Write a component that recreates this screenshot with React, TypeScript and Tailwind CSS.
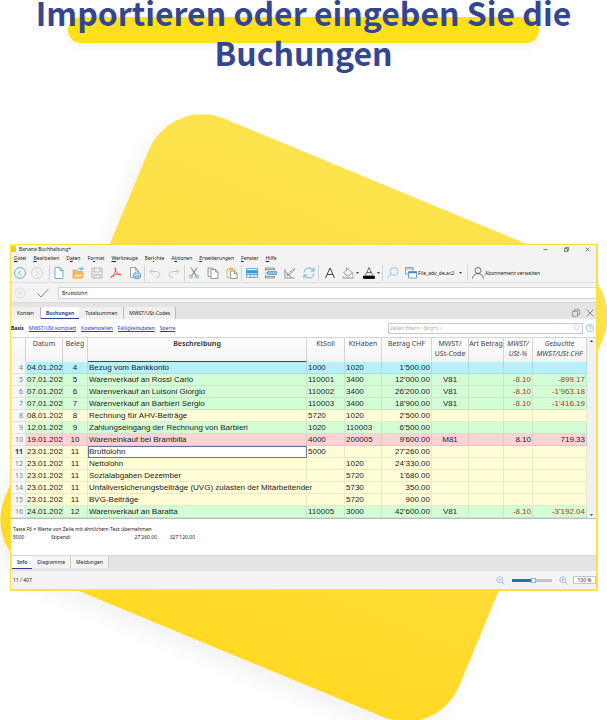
import type { ReactNode } from 'react'

interface Booking {
  nr: number
  datum: string
  beleg: string
  text: string
  soll?: string
  haben?: string
  betrag: string
  code?: string
  satz?: string
  gebucht?: string
  tone: string
}

const BLUE = 'bg-[#b6f0fa]'
const GREEN = 'bg-[#d4fed5]'
const YELLOW = 'bg-[#fffed6]'
const PINK = 'bg-[#fed3d6]'

const bookings: Booking[] = [
  { nr: 4, datum: '04.01.202', beleg: '4', text: 'Bezug vom Bankkonto', soll: '1000', haben: '1020', betrag: "1'500.00", tone: BLUE },
  { nr: 5, datum: '07.01.202', beleg: '5', text: 'Warenverkauf an Rossi Carlo', soll: '110001', haben: '3400', betrag: "12'000.00", code: 'V81', satz: '-8.10', gebucht: '-899.17', tone: GREEN },
  { nr: 6, datum: '07.01.202', beleg: '6', text: 'Warenverkauf an Luisoni Giorgio', soll: '110002', haben: '3400', betrag: "26'200.00", code: 'V81', satz: '-8.10', gebucht: "-1'963.18", tone: GREEN },
  { nr: 7, datum: '07.01.202', beleg: '7', text: 'Warenverkauf an Barbieri Sergio', soll: '110003', haben: '3400', betrag: "18'900.00", code: 'V81', satz: '-8.10', gebucht: "-1'416.19", tone: GREEN },
  { nr: 8, datum: '08.01.202', beleg: '8', text: 'Rechnung für AHV-Beiträge', soll: '5720', haben: '1020', betrag: "2'500.00", tone: YELLOW },
  { nr: 9, datum: '12.01.202', beleg: '9', text: 'Zahlungseingang der Rechnung von Barbieri', soll: '1020', haben: '110003', betrag: "6'500.00", tone: GREEN },
  { nr: 10, datum: '19.01.202', beleg: '10', text: 'Wareneinkauf bei Brambilla', soll: '4000', haben: '200005', betrag: "9'600.00", code: 'M81', satz: '8.10', gebucht: '719.33', tone: PINK },
  { nr: 11, datum: '23.01.202', beleg: '11', text: 'Bruttolohn', soll: '5000', betrag: "27'260.00", tone: YELLOW },
  { nr: 12, datum: '23.01.202', beleg: '11', text: 'Nettolohn', haben: '1020', betrag: "24'330.00", tone: YELLOW },
  { nr: 13, datum: '23.01.202', beleg: '11', text: 'Sozialabgaben Dezember', haben: '5720', betrag: "1'680.00", tone: YELLOW },
  { nr: 14, datum: '23.01.202', beleg: '11', text: 'Unfallversicherungsbeiträge (UVG) zulasten der Mitarbeitender', haben: '5730', betrag: '350.00', tone: YELLOW },
  { nr: 15, datum: '23.01.202', beleg: '11', text: 'BVG-Beiträge', haben: '5720', betrag: '900.00', tone: YELLOW },
  { nr: 16, datum: '24.01.202', beleg: '12', text: 'Warenverkauf an Baratta', soll: '110005', haben: '3000', betrag: "42'600.00", code: 'V81', satz: '-8.10', gebucht: "-3'192.04", tone: GREEN },
]

// [before, access key, after]
const menus = [
  ['', 'D', 'atei'],
  ['', 'B', 'earbeiten'],
  ['D', 'a', 'ten'],
  ['Fo', 'r', 'mat'],
  ['', 'W', 'erkzeuge'],
  ['Ber', 'i', 'chte'],
  ['A', 'k', 'tionen'],
  ['', 'E', 'rweiterungen'],
  ['', 'F', 'enster'],
  ['', 'H', 'ilfe'],
]

function Icon({ children, className = 'size-3 text-[#777]' }: { children: ReactNode; className?: string }) {
  return (
    <svg viewBox="0 0 24 24" fill="none" stroke="currentColor" strokeWidth="1.5" className={`shrink-0 ${className}`} aria-hidden="true">
      {children}
    </svg>
  )
}

function Tool({ label, children }: { label: string; children: ReactNode }) {
  return (
    <button aria-label={label} className="flex h-4 flex-1 items-center justify-center gap-[2px]">
      {children}
    </button>
  )
}

function Divider() {
  return <span className="h-4 w-px shrink-0 bg-[#d4d4d4]" />
}

function Caret() {
  return (
    <svg viewBox="0 0 6 4" className="h-[2px] w-[3px] shrink-0 fill-[#444]" aria-hidden="true">
      <path d="M0 0h6L3 4z" />
    </svg>
  )
}

function Toolbar() {
  return (
    <div className="flex h-[19px] items-center">
      <div className="flex w-[38px] shrink-0 items-center pr-1">
        <Tool label="Zurück">
          <Icon className="size-3 text-[#4596cf]">
            <circle cx="12" cy="12" r="11" />
            <path d="M14 7l-5 5 5 5" />
          </Icon>
        </Tool>
        <Tool label="Vorwärts">
          <Icon className="size-3 text-[#c4c4c4]">
            <circle cx="12" cy="12" r="11" />
            <path d="M10 7l5 5-5 5" />
          </Icon>
        </Tool>
      </div>
      <Divider />
      <div className="flex w-[94px] shrink-0 items-center">
        <Tool label="Neu">
          <Icon className="size-3 text-[#4596cf]">
            <path d="M4 1h10l6 6v16H4zM14 1v6h6" fill="#fff" />
          </Icon>
        </Tool>
        <Tool label="Öffnen">
          <Icon className="size-3 text-[#e5a13a]">
            <path d="M2 22V6h7l2 3h10v13z" fill="#f3b964" />
            <path d="M2 22l4-9h17l-3 9z" fill="#f9d58f" />
            <path d="M12 6c1-4 6-5 9-3M21 0v5h-5" stroke="#4596cf" />
          </Icon>
        </Tool>
        <Tool label="Speichern">
          <Icon className="size-3 text-[#a8a8a8]">
            <path d="M2 2h20v20H2zM6 2v8h12V2M6 22v-7h12v7M9 18h4" />
          </Icon>
        </Tool>
        <Tool label="PDF">
          <Icon className="size-3 text-[#e0342c]">
            <path d="M2 21c3-1 8-8 10-17 .5-3-3-3-2 0 1 5 5 11 11 12 2 0 2-2-1-2-5 0-12 2-17 5-2 1-3 2-1 2z" />
          </Icon>
        </Tool>
        <Tool label="Druckvorschau">
          <Icon className="size-3 text-[#7a8792]">
            <path d="M9 21H3V1h10l5 5v6M13 1v5h5" fill="#fff" />
            <path d="M9 14h14v6H9zM12 14v-4h8v4M12 18h8v5h-8z" stroke="#3f8cc6" fill="#fff" />
          </Icon>
        </Tool>
      </div>
      <Divider />
      <div className="flex w-[39px] shrink-0 items-center">
        <Tool label="Rückgängig">
          <Icon className="size-3 text-[#b5b5b5]">
            <path d="M8 3L2 9l6 6M2 9h13c9 0 9 12 0 12h-2" />
          </Icon>
        </Tool>
        <Tool label="Wiederholen">
          <Icon className="size-3 text-[#b5b5b5]">
            <path d="M16 3l6 6-6 6M22 9H9c-9 0-9 12 0 12h2" />
          </Icon>
        </Tool>
      </div>
      <Divider />
      <div className="flex w-[56px] shrink-0 items-center">
        <Tool label="Ausschneiden">
          <Icon className="size-3 text-[#555]">
            <path d="M6 1l10 16M18 1L8 17" />
            <circle cx="6" cy="19" r="3" stroke="#4596cf" />
            <circle cx="18" cy="19" r="3" stroke="#4596cf" />
          </Icon>
        </Tool>
        <Tool label="Kopieren">
          <Icon>
            <path d="M7 19H2V2h9l3 3" />
            <path d="M8 5h9l5 5v13H8zM17 5v5h5" fill="#fff" />
          </Icon>
        </Tool>
        <Tool label="Einfügen">
          <Icon>
            <path d="M8 21H2V4h16v4M7 4V2h6v3H7" stroke="#e5a13a" />
            <path d="M9 8h8l5 5v10H9zM17 8v5h5" fill="#fff" />
          </Icon>
        </Tool>
      </div>
      <Divider />
      <div className="flex w-[76px] shrink-0 items-center">
        <Tool label="Zeilen hinzufügen">
          <Icon className="size-3 text-[#4596cf]">
            <path d="M1 3h22v18H1zM1 15h22M9 15v6M16 15v6" />
            <path d="M1 7h22v5H1z" fill="#4596cf" />
          </Icon>
        </Tool>
        <Tool label="Zeilen einfügen">
          <Icon>
            <path d="M1 8V2h18v4M1 16v6h18v-4M1 5h17M1 19h17" />
            <path d="M5 9h18v6H5zM5 12H0" stroke="#4596cf" fill="#8fc1e6" />
          </Icon>
        </Tool>
        <Tool label="Prüfen">
          <Icon>
            <path d="M2 4v18h19M2 8l14 14M7 13l-1 4 4-1L22 5" />
            <path d="M9 12L22 2" stroke="#4596cf" />
          </Icon>
        </Tool>
        <Tool label="Neu berechnen">
          <Icon className="size-3 text-[#4596cf]">
            <path d="M2 11C3 1 16-1 21 7M22 1v7h-7M22 13c-1 10-14 12-19 4M2 23v-7h7" />
          </Icon>
        </Tool>
      </div>
      <Divider />
      <div className="flex w-[63px] shrink-0 items-center">
        <Tool label="Schrift">
          <Icon className="size-3 text-[#444]">
            <path d="M3 22L12 2l9 20M6 15h12" strokeWidth="2" />
          </Icon>
        </Tool>
        <Tool label="Hintergrundfarbe">
          <Icon>
            <path d="M4 11l8-8 8 8-7 7H9zM9 6V1M20 11c2 3 3 5 1 5M2 22h20M2 19v3M22 19v3" />
          </Icon>
          <Caret />
        </Tool>
        <Tool label="Textfarbe">
          <Icon className="size-3 text-[#444]">
            <path d="M5 16l7-15 7 15M8 11h8" />
            <path d="M1 18h22v5H1z" fill="#000" stroke="#000" />
          </Icon>
          <Caret />
        </Tool>
      </div>
      <Divider />
      <div className="flex w-[84px] shrink-0 items-center">
        <button aria-label="Suchen" className="flex w-5 items-center justify-center">
          <Icon className="size-3 text-[#7db4dc]">
            <circle cx="14" cy="9" r="8" />
            <path d="M8 15l-7 7" />
          </Icon>
        </button>
        <button className="flex flex-1 items-center gap-px pl-[2px] whitespace-nowrap">
          <Icon className="size-3 text-[#3f8cc6]">
            <path d="M1 1h15v13H1zM1 4h15" fill="#fff" />
            <path d="M7 9h16v13H7z" fill="#fff" />
            <path d="M7 11h16" strokeWidth="3" />
          </Icon>
          <span className="mr-1">File_adv_de.ac2</span>
          <Caret />
        </button>
      </div>
      <Divider />
      <button className="ml-1 flex items-center gap-px whitespace-nowrap">
        <Icon className="size-3 text-[#444]">
          <circle cx="12" cy="7" r="6" />
          <path d="M1 23c1-13 21-13 22 0" />
        </Icon>
        Abonnement verwalten
      </button>
    </div>
  )
}

function BookingTable() {
  return (
    <div className="flex">
      <div className="min-w-0 flex-1">
        <table className="w-full table-fixed border-separate border-spacing-0 font-['Liberation_Sans',Arial,sans-serif] text-[8px] leading-[11px] text-[#222]">
          <colgroup>
            <col className="w-[15px]" />
            <col className="w-[37px]" />
            <col className="w-[25px]" />
            <col />
            <col className="w-[38px]" />
            <col className="w-[37px]" />
            <col className="w-[50px]" />
            <col className="w-[37px]" />
            <col className="w-[35px]" />
            <col className="w-[29px]" />
            <col className="w-[54px]" />
          </colgroup>
          <thead className="bg-linear-to-b from-white to-[#f3f3f3] font-['Noto_Sans',sans-serif] text-[7px] leading-[10px] text-[#444]">
            <tr className="h-[25px] align-top *:border-t *:border-r *:border-[#d4d4d4] *:p-0 *:pt-px *:font-normal *:whitespace-nowrap">
              <th aria-label="Zeile" />
              <th>Datum</th>
              <th>Beleg</th>
              <th className="border-b border-b-[#33428f]!"><b>Beschreibung</b></th>
              <th>KtSoll</th>
              <th>KtHaben</th>
              <th>Betrag CHF</th>
              <th>MWST/<br />USt-Code</th>
              <th>Art Betrag</th>
              <th className="italic">MWST/<br />USt-%</th>
              <th className="italic">Gebuchte<br />MWST/USt CHF</th>
            </tr>
          </thead>
          <tbody>
            {bookings.map((b) => {
              const active = b.nr === 11
              const amount = b.gebucht?.startsWith('-') ? 'text-[#bd2f22]' : ''
              return (
                <tr key={b.nr} className={`h-3 *:border-r *:border-b *:border-black/8 *:p-0 *:whitespace-nowrap ${b.tone}`}>
                  <th className={`bg-[#f7f7f7] pr-[2px]! text-right font-['Noto_Sans',sans-serif] text-[7px] ${active ? 'font-bold text-[#333]' : 'font-normal text-[#777]'}`}>{b.nr}</th>
                  <td className="pl-px!">{b.datum}</td>
                  <td className="text-center">{b.beleg}</td>
                  <td className={`pl-px! ${active ? 'bg-white outline -outline-offset-1 outline-[#6a7299]' : ''}`}>{b.text}</td>
                  <td className="pl-px!">{b.soll}</td>
                  <td className="pl-px!">{b.haben}</td>
                  <td className="pr-px! text-right">{b.betrag}</td>
                  <td className="text-center">{b.code}</td>
                  <td />
                  <td className={`pr-px! text-right ${amount}`}>{b.satz}</td>
                  <td className={`pr-px! text-right ${amount}`}>{b.gebucht}</td>
                </tr>
              )
            })}
          </tbody>
        </table>
      </div>
      <div className="flex w-[9px] flex-col items-center justify-between border-t border-[#d4d4d4] bg-[#f1f1f1] py-[2px]">
        <svg viewBox="0 0 6 4" className="h-[2px] w-[3px] fill-[#333]" aria-hidden="true"><path d="M3 0l3 4H0z" /></svg>
        <Caret />
      </div>
    </div>
  )
}

function AppWindow() {
  return (
    <div className="relative border-t border-r-2 border-b-2 border-l border-[#fde23f] bg-[#f3f3f3] font-['Noto_Sans',sans-serif] text-[5px] leading-[8px] text-[#222]">
      <div className="flex h-2 items-center">
        <span className="h-[6px] w-[5px] bg-[#fbc926]" />
        <span className="ml-[3px]">Banana Buchhaltung+</span>
        <div className="ml-auto flex gap-4 pr-[6px]">
          <button aria-label="Minimieren"><Icon className="size-[5px] text-[#333]"><path d="M2 12h20" strokeWidth="3" /></Icon></button>
          <button aria-label="Wiederherstellen"><Icon className="size-[5px] text-[#333]"><path d="M2 8h14v14H2zM7 8V2h15v15h-6" strokeWidth="3" /></Icon></button>
          <button aria-label="Schliessen"><Icon className="size-[5px] text-[#333]"><path d="M3 3l18 18M21 3L3 21" strokeWidth="3" /></Icon></button>
        </div>
      </div>
      <nav className="flex h-[10px] items-center gap-[7px] pl-[3px]">
        {menus.map(([pre, key, post]) => (
          <button key={post}>{pre}<u>{key}</u>{post}</button>
        ))}
      </nav>
      <Toolbar />
      <div className="flex h-5 items-center border-t border-[#dcdcdc]">
        <button aria-label="Abbrechen" className="flex w-[17px] justify-center">
          <Icon className="size-3 text-[#d6d6d6]"><circle cx="12" cy="12" r="10" /><path d="M8 8l8 8M16 8l-8 8" /></Icon>
        </button>
        <button aria-label="Übernehmen" className="flex w-[30px] justify-center">
          <Icon className="size-3 text-[#8a8a8a]"><path d="M1 13l7 7L23 4" strokeWidth="2" /></Icon>
        </button>
        <input aria-label="Zellinhalt" defaultValue="Bruttolohn" className="h-3 min-w-0 flex-1 border border-r-0 border-[#d4d4d4] bg-white px-[3px]" />
      </div>
      <div className="flex h-[17px] items-end border-t border-[#d8d8d8] bg-[#e4e4e4]">
        <div className="flex h-3 items-stretch">
          <button className="border-r border-[#bbb] bg-[#f0f0f0] px-[6px]">Konten</button>
          <button className="border-b border-[#33428f] bg-white px-[5px] font-bold text-[#33428f]">Buchungen</button>
          <button className="border-r border-[#bbb] bg-[#f0f0f0] px-[6px]">Totalsummen</button>
          <button className="border-r border-[#bbb] bg-[#f0f0f0] px-[5px]">MWST/USt-Codes</button>
        </div>
        <div className="ml-auto flex h-3 items-center gap-[6px] pr-[2px]">
          <button aria-label="Fenster lösen"><Icon className="size-2 text-[#555]"><path d="M2 7h15v15H2zM7 7V2h15v15h-5" /></Icon></button>
          <button aria-label="Schliessen"><Icon className="size-2 text-[#555]"><path d="M2 2l20 20M22 2L2 22" strokeWidth="2" /></Icon></button>
        </div>
      </div>
      <div className="flex h-[18px] items-center gap-[5px] bg-white">
        <b>Basis</b>
        <a href="#komplett" className="text-[#2a35e0] underline">MWST/USt komplett</a>
        <a href="#kostenstellen" className="text-[#2a35e0] underline">Kostenstellen</a>
        <a href="#faelligkeit" className="text-[#2a35e0] underline">Fälligkeitsdaten</a>
        <a href="#sperre" className="text-[#2a35e0] underline">Sperre</a>
        <div className="ml-auto flex h-[11px] w-[195px] items-center border border-[#c8c8c8] pr-[2px]">
          <input aria-label="Zeilen filtern" placeholder="Zeilen filtern <Strg+L>" className="min-w-0 flex-1 pl-px placeholder:text-[#aaa]" />
          <Icon className="size-2 text-[#9cc4e2]"><circle cx="14" cy="9" r="7" /><path d="M9 14l-8 8" /></Icon>
        </div>
        <button aria-label="Hilfe" className="-ml-[2px] pr-[2px]">
          <Icon className="size-2 text-[#4596cf]"><circle cx="12" cy="12" r="11" /><path d="M8 9c0-5 8-5 8 0 0 3-4 3-4 6M12 17v2" /></Icon>
        </button>
      </div>
      <BookingTable />
      <div className="h-[37px] border-t border-[#bbb] bg-white pt-[6px] pl-[2px]">
        <p>Taste F6 = Werte von Zeile mit ähnlichem Text übernehmen</p>
        <div className="flex">
          <span className="w-[38px]">5000</span>
          <span className="w-[61px]">Stipendi</span>
          <span className="w-[45px] text-right">27'260.00</span>
          <span className="w-[38px] text-right">327'120.00</span>
        </div>
      </div>
      <div className="flex h-4 items-start border-t border-[#d8d8d8] bg-[#e4e4e4] pl-px">
        <button className="h-[13px] border-b border-[#33428f] bg-white px-[5px] font-bold text-[#33428f]">Info</button>
        <button className="h-3 border-r border-[#ccc] bg-[#f4f4f4] px-[5px]">Diagramme</button>
        <button className="h-3 border-r border-[#ccc] bg-[#f4f4f4] px-[5px]">Meldungen</button>
      </div>
      <div className="flex h-[18px] items-center pl-[2px]">
        <span>11 / 407</span>
        <button aria-label="Verkleinern" className="ml-auto">
          <Icon className="size-[9px] text-[#6f9fc4]"><circle cx="10" cy="10" r="8" /><path d="M16 16l7 7M6 10h8" /></Icon>
        </button>
        <input
          type="range"
          aria-label="Zoom"
          defaultValue={54}
          className="mx-[7px] h-[5px] w-10 appearance-none bg-[linear-gradient(90deg,#1f74b5_54%,#c4c4c4_54%)] bg-size-[100%_3px] bg-center bg-no-repeat [&::-webkit-slider-thumb]:h-[5px] [&::-webkit-slider-thumb]:w-[5px] [&::-webkit-slider-thumb]:appearance-none [&::-webkit-slider-thumb]:border [&::-webkit-slider-thumb]:border-[#8bb3d3] [&::-webkit-slider-thumb]:bg-white"
        />
        <button aria-label="Vergrössern">
          <Icon className="size-[9px] text-[#6f9fc4]"><circle cx="10" cy="10" r="8" /><path d="M16 16l7 7M6 10h8M10 6v8" /></Icon>
        </button>
        <input aria-label="Zoomstufe" defaultValue="130 %" className="ml-[5px] h-2 w-[23px] border border-[#c4c4c4] bg-white text-center" />
      </div>
    </div>
  )
}

export default function App() {
  return (
    <main className="min-h-screen overflow-hidden bg-white">
      <header className="relative isolate">
        <div className="absolute inset-x-[68px] top-[17px] -z-10 h-[26px] rounded-[13px] bg-[#ffe01b] shadow-[0_4px_8px_rgba(0,0,0,0.06)]" />
        {/* flow-root keeps the pulled-up heading from moving the bar behind it */}
        <div className="flow-root">
          <h1 className="-mt-2 px-5 text-center font-['Noto_Sans_CJK_SC',sans-serif] text-[32px] leading-10 font-bold text-[#344690]">
            Importieren oder eingeben Sie die Buchungen
          </h1>
        </div>
      </header>
      <section className="relative isolate mt-[172px] pr-[9px] pl-[10px]">
        <div className="absolute top-1/2 left-1/2 -z-10 size-[492px] -translate-1/2 rotate-[22.5deg] rounded-[58px] bg-linear-to-b from-[#fde34d] to-[#ffd924] shadow-[-4px_12px_20px_rgba(0,0,0,0.05)]" />
        <AppWindow />
      </section>
    </main>
  )
}
